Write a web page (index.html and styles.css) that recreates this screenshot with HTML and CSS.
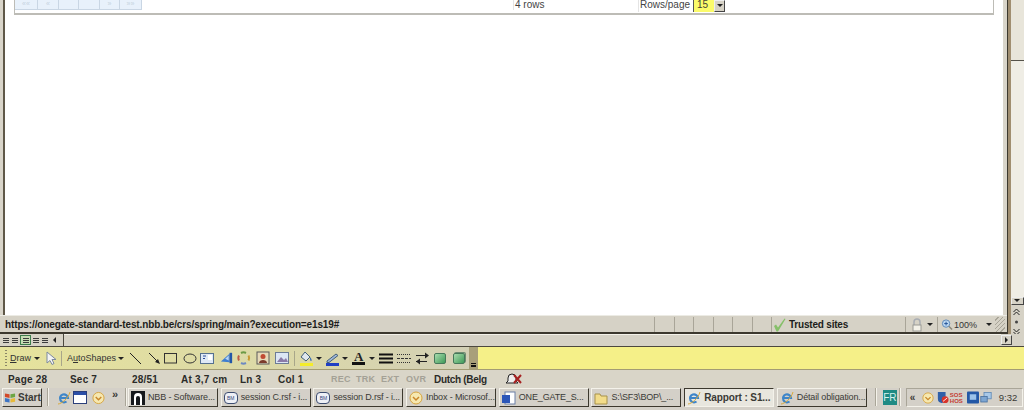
FILE: index.html
```html
<!DOCTYPE html>
<html lang="en">
<head>
  <meta charset="UTF-8">
  <title>Rapport</title>
  <link rel="stylesheet" href="styles.css">
</head>
<body>
  <div class="upper">
    <div class="ie-window">
      <div class="ie-page">
        <div class="panel">
          <div class="pager">
            <span class="pg w1">&laquo;&laquo;</span><span class="pg w2">&laquo;</span><span class="pg w3"></span><span class="pg w4"></span><span class="pg w5">&raquo;</span><span class="pg w6">&raquo;&raquo;</span>
          </div>
          <div class="row-count">4 rows</div>
          <div class="rows-page">
            <span>Rows/page</span>
            <span class="select"><span class="select-val">15</span><span class="select-btn"><i class="arrow"></i></span></span>
          </div>
        </div>
      </div>
      <div class="ie-status">
        <div class="status-url">https://onegate-standard-test.nbb.be/crs/spring/main?execution=e1s19#</div>
        <div class="status-cell"></div><div class="status-cell"></div><div class="status-cell"></div><div class="status-cell"></div><div class="status-cell"></div><div class="status-cell"></div>
        <div class="status-zone">
          <svg width="13" height="14" viewBox="0 0 13 14"><path d="M1 8l2.500 5.500h1.500L12.500 1l-1-.5-6.500 9-2-3z" fill="#86c06a"/></svg>
          <span>Trusted sites</span>
        </div>
        <div class="status-lock">
          <svg width="13" height="14" viewBox="0 0 13 14"><path d="M4 7V4a3 3 0 0 1 6 0v3" fill="none" stroke="#a9adb3" stroke-width="1.500"/><rect x="3" y="7" width="8" height="6" fill="#f3f1e8" stroke="#9a9a94"/></svg>
          <i class="arrow"></i>
        </div>
        <div class="status-zoom">
          <svg width="12" height="13" viewBox="0 0 13 13"><circle cx="5.500" cy="5.500" r="4" fill="#bcd7f0" stroke="#5a86b8"/><path d="M3.500 5.500h4M5.500 3.500v4" stroke="#1f4f96"/><path d="M8.500 8.500l3.500 3.500" stroke="#8b8778" stroke-width="1.500"/></svg>
          <span>100%</span>
          <i class="arrow zoom-arrow"></i>
        </div>
        <div class="grip"></div>
      </div>
    </div>
    <div class="outer-scroll">
      <div class="scroll-track"></div>
      <div class="scroll-btn"><i class="arrow"></i></div>
      <div class="browse-btns">
        <svg width="9" height="28" viewBox="0 0 9 28"><path d="M1.500 4l3-3 3 3M1.500 7l3-3 3 3" fill="none" stroke="#222"/><circle cx="4.500" cy="14" r="1.500" fill="#444"/><path d="M1.500 21l3 3 3-3M1.500 24l3 3 3-3" fill="none" stroke="#222"/></svg>
      </div>
    </div>
  </div>

  <div class="word-hscroll">
    <div class="view-btns">
      <span class="vb"><i></i></span><span class="vb"><i></i></span><span class="vb on"><i></i></span><span class="vb"><i></i></span><span class="vb"><i></i></span>
      <span class="left-arrow"></span>
    </div>
    <div class="hscroll-track"></div>
    <div class="right-btn"><i></i></div>
  </div>

  <div class="word-toolbar">
    <div class="draw-bar">
      <span class="gripper"></span>
      <span class="tb-text"><u>D</u>raw</span><i class="arrow ml3"></i>
      <svg class="ml5" width="12" height="15" viewBox="0 0 12 15"><path d="M2 1v11l3-2.500 2 4 2-1-2-4h4z" fill="#f4f4f4" stroke="#7d8a9e"/></svg>
      <span class="sep"></span>
      <span class="tb-text">A<u>u</u>toShapes</span><i class="arrow ml2"></i>
      <svg class="ml5" width="13" height="13" viewBox="0 0 13 13"><path d="M1 1l11 11" stroke="#222"/></svg>
      <svg class="ml6" width="13" height="13" viewBox="0 0 13 13"><path d="M1 1l9 9" stroke="#222"/><path d="M12 12l-5-2 3-3z" fill="#222"/></svg>
      <svg class="ml3" width="14" height="11" viewBox="0 0 14 11"><rect x=".5" y=".5" width="12" height="9.500" fill="none" stroke="#333"/></svg>
      <svg class="ml5" width="14" height="11" viewBox="0 0 14 11"><ellipse cx="7" cy="5.500" rx="6" ry="4.500" fill="none" stroke="#333"/></svg>
      <svg class="ml3" width="14" height="13" viewBox="0 0 14 13"><rect x=".5" y="1.500" width="13" height="10" fill="#dfe9f5" stroke="#56708f"/><path d="M3 4h3M3 6.500h2" stroke="#2c4c9c"/><rect x="8" y="3" width="4" height="5" fill="#fff"/></svg>
      <svg class="ml6" width="13" height="14" viewBox="0 0 15 14"><path d="M1 11L11 2v10z" fill="#3f7fd0"/><path d="M6 8l4-4v6z" fill="#b9d6f5"/><path d="M11 1h3v12h-3z" fill="#2457a8"/></svg>
      <svg class="ml4" width="14" height="14" viewBox="0 0 14 14"><g fill="none" stroke-width="2"><path d="M4 2a5.500 5.500 0 0 1 5 0" stroke="#6c9a46"/><path d="M11.500 4.500a5.500 5.500 0 0 1 0 5" stroke="#c99a34"/><path d="M9 12a5.500 5.500 0 0 1-5 0" stroke="#6d89c2"/><path d="M2 9.500a5.500 5.500 0 0 1 0-5" stroke="#bf5a45"/></g></svg>
      <svg class="ml5" width="14" height="14" viewBox="0 0 14 14"><rect x="1" y="1" width="12" height="12" fill="#e6d9b8" stroke="#5a5a5a"/><circle cx="7" cy="5.500" r="2.500" fill="#c04a33"/><path d="M3 12c0-4 8-4 8 0z" fill="#7c3b2b"/></svg>
      <svg class="ml5" width="14" height="14" viewBox="0 0 14 14"><rect x=".5" y="1.500" width="13" height="11" fill="#dce6f4" stroke="#6c7c96"/><path d="M2 11l4-5 3 3 2-2 2 4z" fill="#8a7aa8"/></svg>
      <span class="sep sep2"></span>
      <svg width="15" height="15" viewBox="0 0 15 15"><path d="M6 1l5 5-4 4-5-4z" fill="#dfe7ee" stroke="#44607a"/><path d="M11 6c2 2 2 4 1 4s-1-2-1-4z" fill="#3a6fb5"/><rect x="1" y="12" width="13" height="3" fill="#f4ec2a"/></svg>
      <i class="arrow ml2"></i>
      <svg class="ml3" width="15" height="15" viewBox="0 0 15 15"><path d="M2 10l9-7 2 1.500-9 7H2z" fill="#9fb7d8" stroke="#44607a"/><rect x="1" y="12" width="13" height="3" fill="#1f3fc4"/></svg>
      <i class="arrow ml2"></i>
      <span class="font-a ml4">A</span>
      <i class="arrow ml4"></i>
      <svg class="ml4" width="14" height="11" viewBox="0 0 14 11"><path d="M0 1.500h14M0 5.500h14" stroke="#111" stroke-width="2"/><path d="M0 9.500h14" stroke="#111" stroke-width="2"/></svg>
      <svg class="ml4" width="14" height="11" viewBox="0 0 14 11"><path d="M0 1.500h14M0 9.500h14" stroke="#333" stroke-dasharray="1 1"/><path d="M0 5.500h14" stroke="#333" stroke-dasharray="3 1"/></svg>
      <svg class="ml5" width="13" height="13" viewBox="0 0 13 13"><path d="M0 3.500h11M0 9.500h11" stroke="#222"/><path d="M13 3.500l-4-3v6zM0 9.500l4-3v6z" fill="#222"/></svg>
      <span class="cube ml5"></span>
      <span class="cube cube2 ml7"></span>
      <span class="more"><i></i></span>
    </div>
  </div>

  <div class="word-status">
    <span class="s1">Page 28</span>
    <span class="s2">Sec 7</span>
    <span class="s3">28/51</span>
    <span class="s4">At 3,7 cm</span>
    <span class="s5">Ln 3</span>
    <span class="s6">Col 1</span>
    <span class="s7 dim">REC</span>
    <span class="s8 dim">TRK</span>
    <span class="s9 dim">EXT</span>
    <span class="s10 dim">OVR</span>
    <span class="s11">Dutch (Belg</span>
    <svg width="18" height="12" viewBox="0 0 18 12"><path d="M7 1a4 4 0 0 0-4 4v3l-2 2h12l-2-2V5a4 4 0 0 0-4-4z" fill="#eee" stroke="#222"/><path d="M9 2l7 8M16 2l-7 8" stroke="#a62222" stroke-width="2"/></svg>
  </div>

  <div class="taskbar">
    <div class="start"><svg width="12" height="12" viewBox="0 0 13 12"><path d="M1 1l5 1v4L1 5z" fill="#d2492a"/><path d="M7 2l5-1v4l-5 1z" fill="#6ca544"/><path d="M1 6l5 1v4l-5-1z" fill="#3d74c4"/><path d="M7 7l5-1v4l-5 1z" fill="#e6b93a"/></svg><span>Start</span></div>
    <span class="bar-sep sep-a"></span>
    <div class="quick">
      <svg width="14" height="14" viewBox="0 0 14 14"><path d="M3 7h8a4 4 0 1 0-1.500 3.500" fill="none" stroke="#3d85c9" stroke-width="2.200"/><path d="M1 13c3 0 10-5 12-12" fill="none" stroke="#d9a93a"/></svg>
      <svg class="ml2" width="14" height="13" viewBox="0 0 14 13"><rect x=".5" y=".5" width="13" height="12" fill="#fff" stroke="#2b3f7a"/><rect x="1" y="1" width="12" height="3" fill="#2b4fa8"/></svg>
      <svg class="ml5" width="13" height="14" viewBox="0 0 14 14"><circle cx="7" cy="7" r="6" fill="#f6e8b0" stroke="#d6a33e"/><path d="M4 6l3 3 3-3" fill="none" stroke="#c9862a" stroke-width="1.500"/></svg>
      <span class="chev">&raquo;</span>
    </div>
    <span class="bar-sep"></span>
    <div class="tasks">
      <div class="task"><svg width="14" height="14" viewBox="0 0 14 14"><rect width="14" height="14" fill="#16181c"/><path d="M3 14V6a4 4 0 0 1 8 0v8H9V7a2 2 0 0 0-4 0v7z" fill="#fff"/></svg><span>NBB - Software...</span></div>
      <div class="task"><span class="bm">BM</span><span>session C.rsf - i...</span></div>
      <div class="task"><span class="bm">BM</span><span>session D.rsf - i...</span></div>
      <div class="task"><svg width="14" height="14" viewBox="0 0 14 14"><circle cx="7" cy="7" r="6" fill="#f6e8b0" stroke="#d6a33e"/><path d="M4 6l3 3 3-3" fill="none" stroke="#c9862a" stroke-width="1.500"/></svg><span>Inbox - Microsof...</span></div>
      <div class="task"><svg width="14" height="14" viewBox="0 0 14 14"><rect x="3" y="1" width="10" height="12" fill="#fff" stroke="#6a7fa6"/><rect x="0" y="4" width="8" height="8" fill="#2b56b8"/></svg><span>ONE_GATE_S...</span></div>
      <div class="task"><svg width="14" height="14" viewBox="0 0 14 14"><path d="M1 3h5l1 2h6v8H1z" fill="#f2dc8a" stroke="#a8924a"/></svg><span>S:\SF3\BOP\_...</span></div>
      <div class="task active"><svg width="14" height="14" viewBox="0 0 14 14"><path d="M3 7h8a4 4 0 1 0-1.500 3.500" fill="none" stroke="#3d85c9" stroke-width="2.200"/><path d="M1 13c3 0 10-5 12-12" fill="none" stroke="#d9a93a"/></svg><span>Rapport : S1...</span></div>
      <div class="task"><svg width="14" height="14" viewBox="0 0 14 14"><path d="M3 7h8a4 4 0 1 0-1.500 3.500" fill="none" stroke="#3d85c9" stroke-width="2.200"/><path d="M1 13c3 0 10-5 12-12" fill="none" stroke="#d9a93a"/></svg><span>Détail obligation...</span></div>
    </div>
    <span class="bar-sep sep-b"></span>
    <div class="lang">FR</div>
    <span class="bar-sep"></span>
    <div class="tray">
      <span class="tray-chev">&laquo;</span>
      <svg width="12" height="14" viewBox="0 0 14 14"><circle cx="7" cy="7" r="6" fill="#f6e8b0" stroke="#d6a33e"/><path d="M4 6l3 3 3-3" fill="none" stroke="#c9862a" stroke-width="1.500"/></svg>
      <svg class="ml3" width="12" height="15" viewBox="0 0 14 15"><path d="M1 1h9v8a5 5 0 0 1-4.500 5A5 5 0 0 1 1 9z" fill="#2f5fa8"/><circle cx="9.500" cy="10" r="4" fill="#d8342a"/><path d="M7 12l5-4" stroke="#fff"/></svg>
      <span class="sos">SOS<br>HOS</span>
      <svg class="ml3" width="12" height="13" viewBox="0 0 13 13"><rect width="13" height="13" rx="1" fill="#2458a6"/><rect x="3" y="3" width="7" height="6" fill="#9cc3ea"/></svg>
      <svg class="ml1" width="12" height="14" viewBox="0 0 15 14"><rect x="5" y="0" width="9" height="8" fill="#a8c8e8" stroke="#5d87b5"/><rect x="1" y="5" width="8" height="7" fill="#7da6d2" stroke="#466f9e"/></svg>
      <span class="clock">9:32</span>
    </div>
  </div>
</body>
</html>
```

FILE: styles.css
```css
* {
  box-sizing: border-box;
  margin: 0;
  padding: 0;
}
body {
  width: 1024px;
  height: 410px;
  overflow: hidden;
  background: #d6d2c6;
  font: 10px/1 "Liberation Sans", sans-serif;
  color: #222;
  display: flex;
  flex-direction: column;
}
svg {
  flex: none;
  display: block;
}
.arrow {
  display: block;
  flex: none;
  width: 0;
  height: 0;
  border: 3px solid transparent;
  border-top: 3px solid #222;
  border-bottom: 0;
}
.ml1 { margin-left: 1px; }
.ml2 { margin-left: 2px; }
.ml3 { margin-left: 3px; }
.ml4 { margin-left: 4px; }
.ml5 { margin-left: 5px; }
.ml6 { margin-left: 6px; }
.ml7 { margin-left: 7px; }

/* browser window */
.upper {
  display: flex;
  height: 334px;
  flex: none;
}
.ie-window {
  width: 1008px;
  display: flex;
  flex-direction: column;
  background: #d9d5ca;
  border-right: 1px solid #3c382e;
  border-bottom: 2px solid #3c382e;
  padding: 0 4px 0 3px;
}
.ie-page {
  height: 315px;
  flex: none;
  background: #fff;
  padding: 0 9px;
  border-left: 2px solid #5f5848;
}
.panel {
  height: 15px;
  border: 1px solid #bdbcb6;
  border-top: 0;
  border-bottom-width: 2px;
  display: flex;
  color: #444;
  font-size: 10px;
}
.pager {
  display: flex;
  width: 498px;
}
.pg {
  height: 10px;
  background: #e8f1fb;
  border-right: 1px solid #c9d6e4;
  border-bottom: 1px solid #c9d6e4;
  color: #c5d2e0;
  font-size: 7px;
  text-align: center;
}
.w1 { width: 23px; }
.w2 { width: 21px; }
.w3 { width: 20px; }
.w4 { width: 21px; }
.w5 { width: 20px; }
.w6 { width: 22px; }
.row-count {
  width: 125px;
  padding: 0 2px 0 1px;
  height: 10px;
  line-height: 10px;
  border-left: 1px solid #e4e4e4;
}
.rows-page {
  display: flex;
  height: 12px;
  line-height: 10px;
  padding-left: 1px;
  border-left: 1px solid #e4e4e4;
  gap: 3px;
}
.select {
  display: flex;
  height: 12px;
  width: 33px;
}
.select-val {
  width: 21px;
  background: #fbfb6a;
  border-left: 1px solid #555;
  padding-left: 3px;
  color: #443;
}
.select-btn {
  width: 11px;
  height: 12px;
  background: #d6d2c6;
  border: 1px solid;
  border-color: #eee #444 #444 #eee;
  padding: 3px 2px;
}
.ie-status {
  flex: 1;
  display: flex;
  align-items: stretch;
  margin: 0 -4px 0 -3px;
  padding: 1px 0 0 4px;
  background: #d6d2c6;
  border-top: 1px solid #ecebe4;
}
.status-url {
  width: 651px;
  font: bold 10px/15px "Liberation Sans", sans-serif;
  letter-spacing: -.13px;
  padding-left: 1px;
  color: #1d1d1b;
  white-space: nowrap;
  overflow: hidden;
  border-right: 1px solid #a9a598;
}
.status-cell {
  width: 19.500px;
  border-right: 1px solid #a9a598;
}
.status-zone {
  width: 133px;
  display: flex;
  align-items: center;
  gap: 3px;
  padding-left: 1px;
  font: bold 10px "Liberation Sans", sans-serif;
  letter-spacing: -.2px;
  white-space: nowrap;
  overflow: hidden;
  color: #1d1d1b;
}
.status-lock {
  width: 32px;
  display: flex;
  align-items: center;
  gap: 4px;
  border-left: 1px solid #a9a598;
  padding-left: 4px;
}
.status-zoom {
  width: 58px;
  display: flex;
  align-items: center;
  gap: 1px;
  font: 9px "Liberation Sans", sans-serif;
  color: #333;
  border-left: 1px solid #a9a598;
  padding-left: 3px;
}
.zoom-arrow {
  margin-left: 8px;
}
.grip {
  width: 10px;
  background: repeating-linear-gradient(135deg, transparent 0 2px, #a9a598 2px 3px);
}

/* outer scrollbar */
.outer-scroll {
  width: 16px;
  display: flex;
  flex-direction: column;
  background: #d6d2c6;
  border-left: 3px solid #a08e70;
}
.scroll-track {
  height: 297px;
  flex: none;
  background: linear-gradient(#e8e5da 0 60px, #55524a 60px 61px, #efede5 61px);
}
.scroll-btn {
  height: 8px;
  flex: none;
  background: #d6d2c6;
  border: 1px solid;
  border-color: #eee #444 #444 #eee;
  padding: 1px 2px;
}
.browse-btns {
  flex: 1;
  padding: 3px 1px 0;
  background: #d6d2c6;
}

/* word scroll row */
.word-hscroll {
  height: 13px;
  flex: none;
  display: flex;
  align-items: stretch;
  padding-right: 12px;
  background: #d6d2c6;
  border-bottom: 1px solid #4c483e;
}
.view-btns {
  display: flex;
  width: 64px;
  flex: none;
  align-items: center;
  gap: 1px;
  padding-left: 2px;
  border-right: 1px solid #4c483e;
}
.vb {
  width: 8px;
  height: 8px;
  display: flex;
  align-items: center;
  justify-content: center;
}
.vb i {
  width: 6px;
  height: 5px;
  background: repeating-linear-gradient(#3c3c3c 0 1px, transparent 1px 2px);
}
.vb.on {
  width: 11px;
  height: 10px;
  border: 1px solid #3d7d4c;
  background: #c6dcb4;
}
.left-arrow {
  margin-left: 3px;
  border: 3px solid transparent;
  border-right: 3px solid #222;
  border-left: 0;
}
.hscroll-track {
  flex: 1;
  border-top: 1px solid #f4f2ea;
}
.right-btn {
  width: 11px;
  margin: 1px 0;
  border: 1px solid;
  border-color: #eee #444 #444 #eee;
  display: flex;
  align-items: center;
  justify-content: center;
}
.right-btn i {
  border: 3px solid transparent;
  border-left: 3px solid #222;
  border-right: 0;
}

/* draw toolbar */
.word-toolbar {
  height: 23px;
  flex: none;
  background: #f5f088;
  border-bottom: 1px solid #a39c74;
}
.draw-bar {
  display: flex;
  width: 478px;
  height: 22px;
  align-items: center;
  background: linear-gradient(90deg, #e6e39c, #dbd8a8 60%, #d2cfb6);
  padding-left: 5px;
  position: relative;
}
.gripper {
  width: 2px;
  height: 16px;
  margin-right: 3px;
  background: repeating-linear-gradient(#8a8668 0 1px, transparent 1px 3px);
}
.tb-text {
  font-size: 9px;
  padding-top: 1px;
  color: #333;
  flex: none;
}
.sep {
  width: 1px;
  height: 15px;
  flex: none;
  margin: 0 5px 0 4px;
  background: #a8a68a;
}
.sep2 {
  margin: 0 4px 0 5px;
}
.font-a {
  font: bold 13px "Liberation Serif", serif;
  color: #222;
  border-bottom: 3px solid #111;
  line-height: 11px;
  width: 13px;
  text-align: center;
  flex: none;
}
.cube {
  width: 12px;
  height: 11px;
  flex: none;
  border-radius: 2px;
  background: linear-gradient(135deg, #a9dcae, #3f9a58);
  border: 1px solid #46785a;
}
.cube2 {
  box-shadow: 1px -1px 0 #6d8c72;
}
.more {
  position: absolute;
  right: 0;
  top: 0;
  width: 9px;
  height: 22px;
  background: #a89f7a;
}
.more i {
  position: absolute;
  left: 2px;
  bottom: 2px;
  width: 5px;
  height: 4px;
  border-top: 1px solid #111;
  background: linear-gradient(#111, #111) center bottom / 5px 2px no-repeat;
}

/* word status bar */
.word-status {
  height: 18px;
  flex: none;
  display: flex;
  align-items: center;
  background: #d9d5c8;
  font: bold 10px "Liberation Sans", sans-serif;
  letter-spacing: .2px;
  color: #2b2b28;
  white-space: nowrap;
  padding-left: 8px;
}
.word-status span {
  flex: none;
}
.s1 { width: 62px; }
.s2 { width: 62px; }
.s3 { width: 49px; }
.s4 { width: 59px; }
.s5 { width: 38px; }
.s6 { width: 53px; }
.s7 { width: 25px; }
.s8 { width: 25px; }
.s9 { width: 25px; }
.s10 { width: 28px; }
.s11 {
  width: 71px;
  letter-spacing: -.3px;
}
.dim {
  color: #a4a196;
  font-size: 9px;
}

/* taskbar */
.taskbar {
  flex: 1;
  display: flex;
  align-items: flex-start;
  background: #d4d0c8;
  padding: 0 0 0 2px;
  font-size: 9px;
  color: #3a3a36;
}
.start {
  width: 40px;
  height: 19px;
  flex: none;
  display: flex;
  align-items: center;
  gap: 2px;
  padding-left: 1px;
  font-weight: bold;
  font-size: 10px;
  border: 1px solid;
  border-color: #f4f2ea #3c382e #3c382e #f4f2ea;
}
.bar-sep {
  width: 2px;
  height: 18px;
  flex: none;
  border-left: 1px solid #a9a598;
  border-right: 1px solid #f4f2ea;
}
.sep-a {
  margin-left: 5px;
}
.sep-b {
  margin: 0 0 0 8px;
}
.quick {
  display: flex;
  align-items: center;
  height: 19px;
  width: 76px;
  flex: none;
  padding-left: 8px;
}
.chev {
  font-weight: bold;
  margin: -6px 0 0 7px;
  font-size: 11px;
}
.tasks {
  display: flex;
  gap: 2.700px;
  margin-left: 1px;
}
.task {
  width: 90px;
  height: 19px;
  flex: none;
  display: flex;
  align-items: center;
  gap: 3px;
  padding-left: 2px;
  letter-spacing: -.15px;
  white-space: nowrap;
  overflow: hidden;
  border: 1px solid;
  border-color: #f4f2ea #3c382e #3c382e #f4f2ea;
}
.task.active {
  font: bold 10px "Liberation Sans", sans-serif;
  letter-spacing: -.1px;
  border-color: #3c382e #f4f2ea #f4f2ea #3c382e;
  background: #e8e6de;
}
.bm {
  width: 14px;
  height: 12px;
  font-size: 5px;
  line-height: 10px;
  text-align: center;
  border: 1px solid #3c4c70;
  border-radius: 4px;
  color: #33457a;
  background: #eef0f6;
  flex: none;
}
.lang {
  width: 14px;
  height: 15px;
  flex: none;
  background: #1f8a84;
  color: #d8f0ee;
  line-height: 15px;
  text-align: center;
  font-size: 10px;
  margin: 2px 2px 0 6px;
}
.tray {
  flex: 1;
  height: 19px;
  display: flex;
  align-items: center;
  margin-left: 5px;
  padding-left: 3px;
  border: 1px solid;
  border-color: #a9a598 #f4f2ea #f4f2ea #a9a598;
  margin-right: 1px;
}
.tray-chev {
  font-weight: bold;
  font-size: 10px;
  width: 12px;
  flex: none;
}
.sos {
  width: 14px;
  flex: none;
  margin-left: 1px;
  font: bold 6px/6px "Liberation Sans", sans-serif;
  color: #c43c33;
}
.clock {
  margin-left: 7px;
  font-size: 9.500px;
}
```
